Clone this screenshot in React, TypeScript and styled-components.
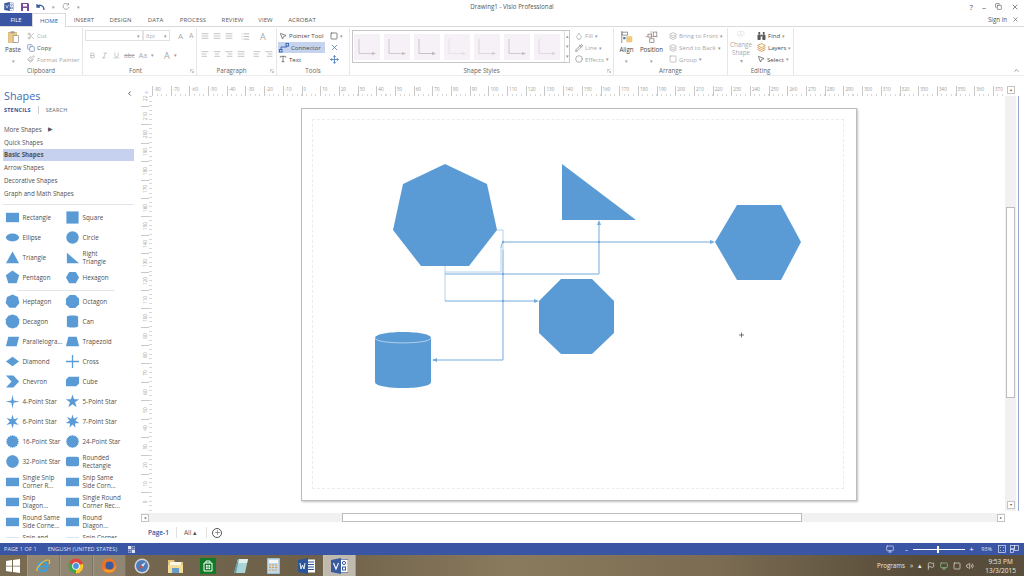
import * as React from 'react';
import styled, { createGlobalStyle } from 'styled-components';
import {
  Scissors, Copy, Paintbrush, MousePointer2, X, ChevronUp, ChevronLeft,
  Bold, Italic, Underline, AlignLeft, AlignCenter, AlignRight, AlignJustify, List,
  Monitor, Volume2, Flag, Plus, Layers, Type, Move, Square, Droplet, Pencil, Circle,
} from 'lucide-react';

const BLUE = '#3a55a4';
const SHAPE = '#5b9bd5';
const LINE = '#74abdd';
const TEXT = '#505050';
const MUTED = '#a9a9a9';

const GlobalStyle = createGlobalStyle`
  html, body { margin: 0; padding: 0; background: #fff; }
  #root { width: 1024px; height: 576px; overflow: hidden; }
  * { box-sizing: border-box; }
`;

const Window = styled.div`
  width: 1024px;
  height: 576px;
  display: flex;
  flex-direction: column;
  font-family: 'Open Sans', 'Noto Sans', sans-serif;
  font-size: 6.5px;
  color: ${TEXT};
  background: #fff;
  overflow: hidden;
`;

/* title bar */
const TitleBar = styled.div`
  height: 13px;
  flex: none;
  display: grid;
  grid-template-columns: 1fr 1fr 1fr;
  align-items: center;
  padding: 0 4px;
`;
const QuickAccess = styled.div`
  display: flex;
  align-items: center;
  gap: 7px;
`;
const Title = styled.div`
  text-align: center;
  font-size: 6.2px;
  white-space: nowrap;
  color: #555;
`;
const WindowControls = styled.div`
  display: flex;
  justify-content: flex-end;
  align-items: center;
  gap: 9px;
  padding-right: 1px;
  font-size: 8px;
`;

/* tabs */
const TabRow = styled.div`
  height: 14px;
  flex: none;
  display: flex;
  align-items: stretch;
  border-bottom: 1px solid #dadada;
`;
const FileTab = styled.div`
  width: 32px;
  background: ${BLUE};
  color: #fff;
  display: flex;
  align-items: center;
  justify-content: center;
  font-size: 6px;
`;
const Tab = styled.div<{ $active?: boolean; $w: number }>`
  width: ${p => p.$w}px;
  display: flex;
  align-items: center;
  justify-content: center;
  font-size: 6px;
  letter-spacing: 0.1px;
  color: ${p => (p.$active ? '#2f56a8' : '#5a5a5a')};
  height: ${p => (p.$active ? '14px' : 'auto')};
  background: #fff;
  border: ${p => (p.$active ? '1px solid #dadada' : 'none')};
  border-bottom: none;
`;
const SignIn = styled.div`
  margin-left: auto;
  display: flex;
  align-items: center;
  gap: 5px;
  padding-right: 5px;
  font-size: 6.2px;
`;

/* ribbon */
const Ribbon = styled.div`
  height: 49px;
  flex: none;
  display: flex;
  position: relative;
  border-bottom: 1px solid #ececec;
`;
const Group = styled.div<{ $w: number }>`
  width: ${p => p.$w}px;
  flex: none;
  display: flex;
  flex-direction: column;
  position: relative;
  margin: 1px 0 0;
  border-right: 1px solid #e6e6e6;
`;
const GroupBody = styled.div<{ $pad?: number }>`
  flex: 1;
  display: flex;
  gap: 4px;
  padding: 2px 2px 0 ${p => p.$pad ?? 4}px;
  min-height: 0;
`;
const GroupLabel = styled.div<{ $shift?: number }>`
  height: 10px;
  flex: none;
  text-align: center;
  font-size: 6.2px;
  line-height: 11px;
  color: #666;
  padding-right: ${p => p.$shift ?? 0}px;
`;
const Launcher = styled.svg`
  position: absolute;
  right: 2px;
  bottom: 2px;
  width: 4px;
  height: 4px;
`;
const BigButton = styled.div<{ $w: number; $muted?: boolean }>`
  width: ${p => p.$w}px;
  flex: none;
  display: flex;
  flex-direction: column;
  align-items: center;
  gap: 3px;
  line-height: 8px;
  text-align: center;
  color: ${p => (p.$muted ? MUTED : '#444')};
  font-size: 6.2px;
  padding-top: 1px;
`;
const Stack = styled.div<{ $w?: number }>`
  display: flex;
  flex-direction: column;
  ${p => (p.$w ? `width: ${p.$w}px; flex: none;` : '')}
`;
const SmallButton = styled.div<{ $muted?: boolean; $active?: boolean }>`
  height: 12px;
  display: flex;
  align-items: center;
  gap: 2px;
  padding: 0 1px;
  white-space: nowrap;
  font-size: 6.1px;
  color: ${p => (p.$muted ? MUTED : '#4a4a4a')};
  background: ${p => (p.$active ? '#c5d3ee' : 'transparent')};
`;
const FontRow = styled.div<{ $indent?: number }>`
  height: 12px;
  display: flex;
  align-items: center;
  gap: 4px;
  margin-bottom: 8px;
  padding-left: ${p => p.$indent ?? 0}px;
  color: ${MUTED};
`;
const Select = styled.div<{ $w: number }>`
  width: ${p => p.$w}px;
  height: 11px;
  border: 1px solid #e2e2e2;
  display: flex;
  align-items: center;
  justify-content: space-between;
  padding: 0 2px;
  margin-right: -4px;
  font-size: 6px;
  color: #b5b5b5;
`;
const Gallery = styled.div`
  width: 218px;
  height: 33px;
  flex: none;
  border: 1px solid #c6c6c6;
  display: flex;
  align-items: center;
  gap: 4px;
  padding: 0 0 0 1px;
`;
const GalleryTile = styled.div`
  width: 26px;
  height: 26px;
  flex: none;
  background: #f6f1f6;
  display: flex;
  align-items: center;
  justify-content: center;
`;
const GalleryArrows = styled.div`
  margin-left: auto;
  align-self: stretch;
  width: 7px;
  display: flex;
  flex-direction: column;
  border-left: 1px solid #e0e0e0;
  color: #999;
  font-size: 5px;
  line-height: 10px;
  text-align: center;
`;
const Caret = styled.span`
  color: #999;
  font-size: 4.5px;
`;
const Collapse = styled.div`
  position: absolute;
  right: 4px;
  bottom: 1px;
  color: #555;
  display: flex;
`;

/* main area */
const Main = styled.div`
  flex: 1;
  min-height: 0;
  display: flex;
`;
const Sidebar = styled.div`
  width: 141px;
  flex: none;
  padding: 13px 0 0 3px;
  margin-bottom: 5px;
  overflow: hidden;
  position: relative;
`;
const PanelTitle = styled.div`
  font-size: 10.8px;
  line-height: 14px;
  color: #3a6cb5;
  padding-left: 1px;
`;
const PanelCaret = styled.div`
  position: absolute;
  top: 14px;
  right: 8px;
  color: #444;
  display: flex;
`;
const PanelTabs = styled.div`
  display: flex;
  gap: 7px;
  align-items: center;
  padding: 1px 0 0 1px;
  font-size: 5.5px;
  height: 12px;
`;
const PanelTab = styled.span<{ $active?: boolean }>`
  font-weight: ${p => (p.$active ? 700 : 400)};
  color: ${p => (p.$active ? '#2f56a0' : '#666')};
  letter-spacing: 0.2px;
`;
const PanelTabDivider = styled.span`
  width: 1px;
  height: 8px;
  background: #ccc;
`;
const Nav = styled.div`
  margin-top: 8px;
  width: 131px;
  padding-bottom: 4px;
  border-bottom: 1px solid #e4e4e4;
`;
const NavItem = styled.div<{ $active?: boolean }>`
  height: 12.8px;
  display: flex;
  align-items: center;
  gap: 6px;
  padding-left: 1px;
  font-size: 6.2px;
  font-weight: ${p => (p.$active ? 700 : 400)};
  background: ${p => (p.$active ? '#c5d1ee' : 'transparent')};
`;
const ShapeGrid = styled.div<{ $top: number }>`
  display: grid;
  grid-template-columns: 60px 62px;
  grid-auto-rows: 20px;
  padding: ${p => p.$top}px 0 0 2px;
`;
const ShapeItem = styled.div`
  display: flex;
  align-items: center;
  gap: 2.5px;
  line-height: 7.8px;
  font-size: 6.3px;
  color: #505050;
`;
const ShapeName = styled.span`
  white-space: pre-line;
`;
const ShapeDivider = styled.div`
  height: 1px;
  width: 97px;
  margin: 2px 0 1px 14px;
  background: #e4e4e4;
`;

/* workspace */
const Workspace = styled.div`
  flex: 1;
  min-width: 0;
  margin-top: 10px;
  display: flex;
  flex-direction: column;
`;
const RulerRow = styled.div`
  height: 10px;
  flex: none;
  display: flex;
`;
const RulerCorner = styled.div`
  width: 11px;
  flex: none;
  display: flex;
  justify-content: center;
  align-items: center;
  color: #b9c8e8;
  font-size: 8px;
`;
const HRuler = styled.div`
  flex: 1;
  display: flex;
  overflow: hidden;
  background: repeating-linear-gradient(90deg, #d8d8d8 0 1px, transparent 1px 4.67px) 0 100% / 100% 2px no-repeat;
`;
const HTick = styled.div`
  width: 18.7px;
  flex: none;
  height: 10px;
  border-left: 1px solid #c8c8c8;
  padding-left: 1px;
  font-size: 4.6px;
  line-height: 7px;
  color: #9a9a9a;
`;
const RulerEnd = styled.div`
  width: 19px;
  flex: none;
  padding-left: 2px;
  display: flex;
  align-items: flex-start;
`;
const ScrollButton = styled.div`
  width: 8px;
  height: 8px;
  border: 1px solid #c4c4c4;
  background: #fff;
  display: flex;
  align-items: center;
  justify-content: center;
  flex: none;
  font-size: 4px;
  line-height: 1;
  color: #555;
`;
const CanvasRow = styled.div`
  flex: 1;
  min-height: 0;
  display: flex;
`;
const VRuler = styled.div`
  width: 11px;
  flex: none;
  display: flex;
  flex-direction: column;
  overflow: hidden;
  background: repeating-linear-gradient(0deg, #d8d8d8 0 1px, transparent 1px 4.6px) 100% 0 / 3px 100% no-repeat;
`;
const VTick = styled.div`
  height: 18.4px;
  flex: none;
  border-bottom: 1px solid #c8c8c8;
  font-size: 4.6px;
  color: #9a9a9a;
  display: flex;
  align-items: center;
  width: 8px;
  &:first-child {
    margin-top: -7.4px;
  }
`;
const VTickLabel = styled.span`
  transform: rotate(-90deg);
  display: block;
  width: 8px;
  text-align: center;
`;
const Canvas = styled.div`
  flex: 1;
  min-width: 0;
  padding: 12px 0 0 149px;
  background: #fff;
  overflow: hidden;
`;
const Page = styled.div`
  width: 556px;
  height: 393px;
  position: relative;
  background: #fff;
  border: 1px solid #bdbdbd;
  box-shadow: 1px 1px 2px rgba(0, 0, 0, 0.25);
`;
const PageMargin = styled.div`
  position: absolute;
  inset: 10px 12px 11px 10px;
  border: 1px dashed #ececec;
`;
const Drawing = styled.svg`
  position: absolute;
  inset: 0;
  width: 100%;
  height: 100%;
  overflow: visible;
`;
const VScroll = styled.div`
  width: 11px;
  flex: none;
  background: #f1f1f1;
  display: flex;
  flex-direction: column;
  align-items: center;
  justify-content: space-between;
  padding: 111px 0 2px;
`;
const VThumb = styled.div`
  width: 9px;
  height: 191px;
  background: #fff;
  border: 1px solid #bdbdbd;
`;
const ScrollGutter = styled.div`
  width: 8px;
  flex: none;
  display: flex;
`;
const BlueEdge = styled.div`
  width: 1px;
  height: 100%;
  margin-left: 2px;
  background: #9aa9d2;
`;
const HScrollRow = styled.div`
  height: 9px;
  flex: none;
  display: flex;
  background: #f1f1f1;
  margin-right: 19px;
  margin-top: 2px;
  align-items: center;
`;
const HThumb = styled.div`
  width: 460px;
  height: 9px;
  margin-left: 193px;
  margin-right: auto;
  background: #fff;
  border: 1px solid #bdbdbd;
`;
const PageTabs = styled.div`
  height: 21px;
  flex: none;
  display: flex;
  align-items: center;
  padding-left: 7px;
  font-size: 6.5px;
  position: relative;
`;
const PageTab = styled.span`
  color: #34559f;
  font-weight: 600;
  width: 28px;
  flex: none;
`;
const AllTab = styled.span`
  width: 31px;
  flex: none;
  border-left: 1px solid #e0e0e0;
  border-right: 1px solid #e0e0e0;
  padding: 1px 0 1px 7px;
  color: #555;
`;
const AddPage = styled.span`
  margin-left: 5px;
  width: 10px;
  height: 10px;
  border-radius: 50%;
  border: 1px solid #555;
  display: flex;
  align-items: center;
  justify-content: center;
  color: #555;
`;

/* status bar */
const StatusBar = styled.div`
  height: 12px;
  flex: none;
  display: flex;
  align-items: center;
  background: ${BLUE};
  color: #dfe5f5;
  font-size: 5.5px;
  padding: 0 5px 0 4px;
`;
const StatusText = styled.span`
  margin-right: 11px;
  letter-spacing: 0.1px;
`;
const StatusRight = styled.div`
  margin-left: auto;
  display: flex;
  align-items: center;
  gap: 4px;
`;
const ZoomSign = styled.span`
  font-size: 8px;
  line-height: 8px;
  width: 5px;
  text-align: center;
  color: #fff;
`;
const ZoomPercent = styled.span`
  margin: 0 2px 0 3px;
`;
const ZoomTrack = styled.div`
  width: 52px;
  height: 1px;
  background: #fff;
  position: relative;
`;
const ZoomThumb = styled.div`
  position: absolute;
  left: 24px;
  top: -3px;
  width: 2px;
  height: 7px;
  background: #fff;
`;

/* task bar */
const Taskbar = styled.div`
  height: 21px;
  flex: none;
  display: flex;
  align-items: center;
  background: linear-gradient(90deg, #7a6c53 0%, #6d6049 30%, #8a7a5d 50%, #7b6c52 70%, #564b39 90%, #5a4f3c 100%);
  color: #ece8df;
  font-size: 6.5px;
`;
const StartButton = styled.div`
  width: 27px;
  flex: none;
  display: flex;
  justify-content: center;
  padding-right: 1px;
`;
const TaskTile = styled.div<{ $level?: number }>`
  width: 32.9px;
  height: 21px;
  flex: none;
  display: flex;
  align-items: center;
  justify-content: center;
  background: rgba(255, 255, 255, ${p => p.$level ?? 0});
  border-left: 1px solid rgba(255, 255, 255, ${p => (p.$level ? 0.15 : 0)});
  border-right: 1px solid rgba(0, 0, 0, ${p => (p.$level ? 0.15 : 0)});
`;
const Tray = styled.div`
  margin-left: auto;
  display: flex;
  align-items: center;
  gap: 5px;
  padding-right: 8px;
`;
const TrayLabel = styled.span`
  font-size: 6.2px;
`;
const Clock = styled.div`
  text-align: center;
  line-height: 9px;
  font-size: 6.5px;
  margin-left: 6px;
`;

const CHEVRON = '▾';

const star = (n: number, inner: number, cx = 8, cy = 8, outer = 7.5) =>
  Array.from({ length: n * 2 }, (_, i) => {
    const r = i % 2 ? inner : outer;
    const a = (Math.PI * i) / n - Math.PI / 2;
    return `${(cx + r * Math.cos(a)).toFixed(2)},${(cy + r * Math.sin(a)).toFixed(2)}`;
  }).join(' ');

const gon = (n: number) => star(n, 6.8).split(' ').filter((_, i) => i % 2 === 0).join(' ');

const ShapeIcon = ({ kind }: { kind: string }) => {
  const shapes: Record<string, React.ReactNode> = {
    rect: <rect x="1" y="3" width="14" height="10" />,
    square: <rect x="1.5" y="1.5" width="13" height="13" />,
    ellipse: <ellipse cx="8" cy="8" rx="7" ry="4.2" />,
    circle: <circle cx="8" cy="8" r="6.6" />,
    triangle: <polygon points="8,1.5 15,14 1,14" />,
    right: <polygon points="2,3 15,14 2,14" />,
    pentagon: <polygon points={gon(5)} />,
    hexagon: <polygon points="1,8 4.5,2 11.5,2 15,8 11.5,14 4.5,14" />,
    heptagon: <polygon points={gon(7)} />,
    octagon: <polygon points="5,1 11,1 15,5 15,11 11,15 5,15 1,11 1,5" />,
    decagon: <polygon points={gon(10)} />,
    can: <path d="M2 3c0-2 12-2 12 0v10c0 2-12 2-12 0z" />,
    para: <polygon points="3.5,3 15,3 12.5,13 1,13" />,
    trapezoid: <polygon points="3.5,3 12.5,3 15,13 1,13" />,
    diamond: <polygon points="8,3 15,8 8,13 1,8" />,
    cross: <polygon points="7.3,1 8.7,1 8.7,7.3 15,7.3 15,8.7 8.7,8.7 8.7,15 7.3,15 7.3,8.7 1,8.7 1,7.3 7.3,7.3" />,
    chevron: <polygon points="1,1.5 9,1.5 15,8 9,14.5 1,14.5 7,8" />,
    cube: <path d="M1 6l3-3h11v7l-3 3H1z" />,
    s4: <polygon points={star(4, 1.7)} />,
    s5: <polygon points={star(5, 2.9)} />,
    s6: <polygon points={star(6, 2.8)} />,
    s7: <polygon points={star(7, 3.2)} />,
    s16: <polygon points={star(16, 5.9, 8, 8, 7)} />,
    s24: <polygon points={star(24, 6.2, 8, 8, 7)} />,
    s32: <polygon points={star(32, 6.3, 8, 8, 7)} />,
    round: <rect x="1" y="3" width="14" height="10" rx="2" />,
    plain: <rect x="1" y="4" width="14" height="9" />,
  };
  return (
    <svg width="15" height="15" viewBox="0 0 16 16" fill={SHAPE} style={{ flex: 'none' }}>
      {shapes[kind]}
    </svg>
  );
};

const ElbowArrow = ({ color }: { color: string }) => (
  <svg width="26" height="26" viewBox="0 0 26 26" fill="none" stroke={color} strokeWidth="0.8">
    <path d="M5 5v14.500h14" />
    <polygon points="22,19.500 18,17.800 18,21.200" fill={color} stroke="none" />
  </svg>
);

const DialogLauncher = () => (
  <Launcher viewBox="0 0 4 4" fill="none" stroke="#aaa" strokeWidth="0.6">
    <path d="M0.3 3.700V0.300h3.400M1 1l2.500 2.500M3.500 2v1.500H2" />
  </Launcher>
);

const PasteIcon = () => (
  <svg width="17" height="18" viewBox="0 0 17 18">
    <rect x="1" y="2" width="12" height="15" fill="#edc987" stroke="#d3ae6c" />
    <rect x="4" y="0.5" width="6" height="3" fill="#9a9a9a" />
    <rect x="8" y="7" width="8" height="10" fill="#fff" stroke="#888" />
  </svg>
);

const AlignIcon = () => (
  <svg width="16" height="16" viewBox="0 0 16 16">
    <path d="M1 0v16" stroke="#777" />
    <rect x="1.5" y="1.5" width="7" height="4" fill="#fff" stroke="#777" />
    <rect x="3" y="8" width="3" height="3" fill="#3b78b8" />
    <rect x="7" y="7" width="8" height="8" fill="#efc77f" />
  </svg>
);

const PositionIcon = () => (
  <svg width="17" height="17" viewBox="0 0 17 17" fill="none" stroke="#777">
    <path d="M0 8h17M8 0v17" stroke="#d98a75" />
    <rect x="3.5" y="4.5" width="5" height="4" fill="#fff" />
    <rect x="11" y="1.5" width="5" height="6" fill="#fff" />
    <rect x="6" y="11" width="6" height="5" fill="#fff" />
  </svg>
);

const ChangeShapeIcon = () => (
  <svg width="18" height="17" viewBox="0 0 19 18" fill="#fff" stroke="#cfcfcf">
    <path d="M1 1h10v10H1z" />
    <circle cx="13" cy="6" r="5" />
    <path d="M8 9l5 4-5 4-5-4z" />
  </svg>
);

const ConnectorIcon = () => (
  <svg width="10" height="10" viewBox="0 0 10 10" fill="none" stroke="#3f6db5">
    <rect x="0.5" y="6.5" width="2.5" height="2.5" />
    <rect x="7" y="0.5" width="2.5" height="2.5" />
    <path d="M2 6.5V4h6V3" />
  </svg>
);

const Binoculars = () => (
  <svg width="9" height="8" viewBox="0 0 10 9" fill="#5a5a5a">
    <rect x="0.5" y="3" width="3.6" height="6" rx="1" />
    <rect x="5.9" y="3" width="3.6" height="6" rx="1" />
    <rect x="1.5" y="0" width="2" height="3" />
    <rect x="6.5" y="0" width="2" height="3" />
    <rect x="4" y="3" width="2" height="2" />
  </svg>
);

const MacroIcon = () => (
  <svg width="7" height="7" viewBox="0 0 7 7" fill="#dfe5f5">
    <rect x="0" y="0" width="3" height="3" />
    <rect x="4" y="0" width="3" height="3" fill="none" stroke="#dfe5f5" strokeWidth="0.7" />
    <rect x="0" y="4" width="3" height="3" fill="none" stroke="#dfe5f5" strokeWidth="0.7" />
    <rect x="4" y="4" width="3" height="3" />
  </svg>
);

const FitIcon = () => (
  <svg width="8" height="8" viewBox="0 0 8 8" fill="none" stroke="#dfe5f5" strokeWidth="0.7">
    <rect x="0.4" y="0.4" width="7.200" height="7.200" />
    <path d="M2 2l1 1M6 2L5 3M2 6l1-1M6 6L5 5" />
  </svg>
);

const PanIcon = () => (
  <svg width="9" height="8" viewBox="0 0 9 8" fill="none" stroke="#dfe5f5" strokeWidth="0.7">
    <rect x="0.4" y="0.4" width="4" height="3" />
    <rect x="4.600" y="0.4" width="4" height="5" />
    <rect x="0.4" y="4.400" width="3" height="3.200" />
  </svg>
);

const WinLogo = () => (
  <svg width="14" height="14" viewBox="0 0 14 14" fill="#fff">
    <polygon points="0,2 6,1.1 6,6.7 0,6.7" />
    <polygon points="7,1 14,0 14,6.7 7,6.7" />
    <polygon points="0,7.4 6,7.4 6,12.9 0,12" />
    <polygon points="7,7.4 14,7.4 14,14 7,13" />
  </svg>
);

const IeIcon = () => (
  <svg width="16" height="16" viewBox="0 0 16 16" fill="none">
    <circle cx="8" cy="8.5" r="4.6" stroke="#2fa4e7" strokeWidth="2" />
    <path d="M3 8.5h10" stroke="#2fa4e7" strokeWidth="1.6" />
    <path d="M2 13C1 10 8 2 13 2c2 0 2 2 1 4" stroke="#f3c230" strokeWidth="1.2" />
  </svg>
);

const ChromeIcon = () => (
  <svg width="16" height="16" viewBox="0 0 16 16">
    <circle cx="8" cy="8" r="7.5" fill="#e0463a" />
    <path d="M8 8L1.2 4.8A7.5 7.5 0 0 0 8 15.5L11 9z" fill="#3ca650" />
    <path d="M8 8l7-2.2A7.5 7.5 0 0 1 8 15.5z" fill="#f5c92f" />
    <circle cx="8" cy="8" r="3.8" fill="#fff" />
    <circle cx="8" cy="8" r="2.9" fill="#4a8fe0" />
  </svg>
);

const FirefoxIcon = () => (
  <svg width="16" height="16" viewBox="0 0 16 16">
    <circle cx="8" cy="8" r="7.5" fill="#e8742a" />
    <circle cx="8.5" cy="7.5" r="4" fill="#3a5aa0" />
    <path d="M2 11C3 14 8 15 11 14c3-1 4-4 4-7-1 3-3 5-6 5s-5-1-7-1z" fill="#f2a02c" />
  </svg>
);

const SafariIcon = () => (
  <svg width="16" height="16" viewBox="0 0 16 16">
    <circle cx="8" cy="8" r="7.5" fill="#cfd3d8" />
    <circle cx="8" cy="8" r="6" fill="#4c7cbc" />
    <polygon points="12,4 9,9 7,7" fill="#e0e4ea" />
    <polygon points="4,12 9,9 7,7" fill="#d64a3a" />
  </svg>
);

const FolderIcon = () => (
  <svg width="17" height="16" viewBox="0 0 17 16">
    <path d="M1 2h6l1 2h8v11H1z" fill="#e8c678" />
    <rect x="3" y="4" width="11" height="4" fill="#fbf6e6" />
    <path d="M1 7h15v8H1z" fill="#f4dc9b" />
    <rect x="5" y="10" width="7" height="5" fill="#6a9cc8" />
  </svg>
);

const StoreIcon = () => (
  <svg width="16" height="16" viewBox="0 0 16 16">
    <rect width="16" height="16" fill="#0f7b24" />
    <path d="M4 5h8v8H4z" fill="none" stroke="#fff" />
    <path d="M6 5V3h4v2" fill="none" stroke="#fff" />
    <rect x="6" y="7" width="1.7" height="1.7" fill="#fff" />
    <rect x="8.4" y="7" width="1.7" height="1.7" fill="#fff" />
    <rect x="6" y="9.4" width="1.7" height="1.7" fill="#fff" />
    <rect x="8.4" y="9.4" width="1.7" height="1.7" fill="#fff" />
  </svg>
);

const NotesIcon = () => (
  <svg width="16" height="16" viewBox="0 0 16 16">
    <polygon points="5,1 15,1 12,15 1,15" fill="#a9d3d6" />
    <polygon points="5,1 15,1 14,5 4,5" fill="#dff0ee" />
    <polygon points="1,15 5,1 6,1 3,15" fill="#5f9ea6" />
  </svg>
);

const CalcIcon = () => (
  <svg width="13" height="16" viewBox="0 0 13 16">
    <rect width="13" height="16" fill="#c2d9ea" stroke="#7ba2c2" />
    <rect x="2" y="2" width="9" height="3" fill="#f4f8fb" />
    <path d="M2 7h9M2 9.5h9M2 12h9" stroke="#e29a43" strokeDasharray="2 1" />
  </svg>
);

const WordIcon = () => (
  <svg width="17" height="16" viewBox="0 0 17 16">
    <rect x="8" y="1.5" width="9" height="13" fill="#fff" />
    <path d="M10 4h6M10 6.5h6M10 9h6M10 11.5h6" stroke="#2a5699" />
    <polygon points="0,2 10,0 10,16 0,14" fill="#2a5699" />
    <path d="M2 5l1 6 1.5-4L6 11l1-6" stroke="#fff" fill="none" strokeWidth="0.9" />
  </svg>
);

const VisioIcon = ({ size = 16 }: { size?: number }) => (
  <svg width={size + 1} height={size} viewBox="0 0 17 16">
    <rect x="8" y="1.5" width="9" height="13" fill="#fff" stroke="#3a5aa0" strokeWidth="0.6" />
    <circle cx="13" cy="5" r="1.6" fill="none" stroke="#3a5aa0" />
    <rect x="11.5" y="9" width="3" height="3" fill="none" stroke="#3a5aa0" />
    <polygon points="0,2 10,0 10,16 0,14" fill="#3a5aa0" />
    <path d="M2.5 5L5 11l2.5-6" stroke="#fff" fill="none" strokeWidth="1.1" />
  </svg>
);

type ShapeDef = [string, string];
const TOP_SHAPES: ShapeDef[] = [
  ['rect', 'Rectangle'], ['square', 'Square'],
  ['ellipse', 'Ellipse'], ['circle', 'Circle'],
  ['triangle', 'Triangle'], ['right', 'Right\nTriangle'],
  ['pentagon', 'Pentagon'], ['hexagon', 'Hexagon'],
];
const MORE_SHAPES: ShapeDef[] = [
  ['heptagon', 'Heptagon'], ['octagon', 'Octagon'],
  ['decagon', 'Decagon'], ['can', 'Can'],
  ['para', 'Parallelogra...'], ['trapezoid', 'Trapezoid'],
  ['diamond', 'Diamond'], ['cross', 'Cross'],
  ['chevron', 'Chevron'], ['cube', 'Cube'],
  ['s4', '4-Point Star'], ['s5', '5-Point Star'],
  ['s6', '6-Point Star'], ['s7', '7-Point Star'],
  ['s16', '16-Point Star'], ['s24', '24-Point Star'],
  ['s32', '32-Point Star'], ['round', 'Rounded\nRectangle'],
  ['plain', 'Single Snip\nCorner R...'], ['plain', 'Snip Same\nSide Corn...'],
  ['plain', 'Snip\nDiagon...'], ['plain', 'Single Round\nCorner Rec...'],
  ['plain', 'Round Same\nSide Corne...'], ['plain', 'Round\nDiagon...'],
  ['plain', 'Snip and\nRound...'], ['plain', 'Snip Corner\nRectangle'],
];
const NAV = ['Quick Shapes', 'Basic Shapes', 'Arrow Shapes', 'Decorative Shapes', 'Graph and Math Shapes'];
const TABS: [string, number][] = [
  ['INSERT', 36], ['DESIGN', 37], ['DATA', 33], ['PROCESS', 42], ['REVIEW', 37], ['VIEW', 29], ['ACROBAT', 44],
];
const TILE_COLORS = ['#c4bfc4', '#c4bfc4', '#bdb8bd', '#e2dee2', '#d4d0d4', '#c4bfc4', '#dad6da'];

const hLabels = Array.from({ length: 46 }, (_, i) => -80 + i * 10);
const vLabels = Array.from({ length: 23 }, (_, i) => 220 - i * 10);

const Connectors = () => (
  <Drawing viewBox="302 109 554 391">
    <polygon fill={SHAPE} points="445,164 487,184 497,230 469,266 421,266 393,230 403,184" />
    <polygon fill={SHAPE} points="562,164 636,220 562,220" />
    <polygon fill={SHAPE} points="561,279 592,279 614,301 614,333 592,354 561,354 539,333 539,301" />
    <polygon fill={SHAPE} points="715,242 737,205 781,205 801,242 781,280 737,280" />
    <path fill={SHAPE} d="M375 338c0-8 56-8 56 0v44c0 8-56 8-56 0z" />
    <path fill="none" stroke="#c4dcf0" strokeWidth="0.8" d="M375 338c0 6.500 56 6.500 56 0" />

    <g fill="none" stroke="#b5d2ec" strokeWidth="1">
      <path d="M497 230h6v20" />
      <path d="M445 266v35" />
      <path d="M445 272h56v-24" />
    </g>
    <g fill="none" stroke={LINE} strokeWidth="1">
      <path d="M503 250v110H433" />
      <path d="M445 274h154V224" />
      <path d="M445 301h90" />
      <path d="M501 248q0-6 4-6h208" />
    </g>
    <g fill={LINE}>
      <polygon points="432,360 437,358 437,362" />
      <polygon points="539,301 534,299 534,303" />
      <polygon points="599,220 597,225 601,225" />
      <polygon points="715,242 710,240 710,244" />
      <circle cx="503" cy="274" r="1.200" />
      <circle cx="503" cy="301" r="1.200" />
      <circle cx="503" cy="242" r="1.200" />
      <circle cx="599" cy="242" r="1.200" />
    </g>
    <path d="M739 335h5M741.500 332.500v5" stroke="#555" strokeWidth="0.8" />
  </Drawing>
);

const App = () => (
  <Window>
    <GlobalStyle />
    <TitleBar>
      <QuickAccess>
        <VisioIcon size={9} />
        <svg width="8" height="8" viewBox="0 0 8 8" fill="#7a4a9a">
          <path d="M0 0h7l1 1v7H0zM2 1v2.500h4V1zM2 5v3h4V5z" fillRule="evenodd" />
        </svg>
        <svg width="9" height="8" viewBox="0 0 9 8" fill="none" stroke="#3a5aa0" strokeWidth="1.300">
          <path d="M1 1v3h3M1 4c2-3 7-2 7 3" />
        </svg>
        <Caret>{CHEVRON}</Caret>
        <svg width="8" height="8" viewBox="0 0 8 8" fill="none" stroke="#aaa">
          <path d="M6.500 1.500A3 3 0 1 0 7 4M6.500 0v2h-2" />
        </svg>
        <Caret>{CHEVRON}</Caret>
      </QuickAccess>
      <Title>Drawing1 - Visio Professional</Title>
      <WindowControls>
        <span>?</span>
        <span>–</span>
        <Copy size={7} />
        <X size={8} />
      </WindowControls>
    </TitleBar>

    <TabRow>
      <FileTab>FILE</FileTab>
      <Tab $active $w={34}>HOME</Tab>
      {TABS.map(([t, w]) => (
        <Tab key={t} $w={w}>{t}</Tab>
      ))}
      <SignIn>
        Sign in <X size={7} />
      </SignIn>
    </TabRow>

    <Ribbon>
      <Group $w={83}>
        <GroupBody>
          <BigButton $w={18}>
            <PasteIcon />
            Paste
            <Caret>{CHEVRON}</Caret>
          </BigButton>
          <Stack>
            <SmallButton $muted><Scissors size={8} /> Cut</SmallButton>
            <SmallButton><Copy size={8} color="#5c7fae" /> Copy</SmallButton>
            <SmallButton $muted><Paintbrush size={8} /> Format Painter</SmallButton>
          </Stack>
        </GroupBody>
        <GroupLabel>Clipboard</GroupLabel>
      </Group>

      <Group $w={114}>
        <GroupBody $pad={2}>
          <Stack>
            <FontRow>
              <Select $w={58}><span /><Caret>{CHEVRON}</Caret></Select>
              <Select $w={27}>8pt<Caret>{CHEVRON}</Caret></Select>
              <span style={{ marginLeft: 8, fontSize: 8 }}>A</span>
              <span style={{ marginLeft: 2, fontSize: 7 }}>A</span>
            </FontRow>
            <FontRow $indent={4}>
              <Bold size={7} />
              <Italic size={7} style={{ marginLeft: 1 }} />
              <Underline size={7} style={{ marginLeft: 1 }} />
              <span style={{ textDecoration: 'line-through' }}>abc</span>
              <span style={{ fontSize: 7 }}>Aa</span>
              <Caret>{CHEVRON}</Caret>
              <span style={{ marginLeft: 6, fontSize: 9 }}>A</span>
              <Caret>{CHEVRON}</Caret>
            </FontRow>
          </Stack>
        </GroupBody>
        <GroupLabel $shift={8}>Font</GroupLabel>
        <DialogLauncher />
      </Group>

      <Group $w={80}>
        <GroupBody $pad={4}>
          <Stack>
            <FontRow>
              <AlignJustify size={8} />
              <AlignJustify size={8} />
              <AlignJustify size={8} />
              <List size={9} style={{ marginLeft: 4 }} />
              <span style={{ marginLeft: 6, fontSize: 9 }}>A</span>
            </FontRow>
            <FontRow>
              <AlignLeft size={8} />
              <AlignCenter size={8} />
              <AlignRight size={8} />
              <AlignJustify size={8} />
              <AlignLeft size={8} style={{ marginLeft: 4 }} />
              <AlignRight size={8} />
            </FontRow>
          </Stack>
        </GroupBody>
        <GroupLabel $shift={10}>Paragraph</GroupLabel>
        <DialogLauncher />
      </Group>

      <Group $w={73}>
        <GroupBody $pad={1}>
          <Stack $w={47}>
            <SmallButton><MousePointer2 size={8} /> Pointer Tool</SmallButton>
            <SmallButton $active><ConnectorIcon /> Connector</SmallButton>
            <SmallButton><Type size={8} /> Text</SmallButton>
          </Stack>
          <Stack>
            <SmallButton><Square size={8} /><Caret>{CHEVRON}</Caret></SmallButton>
            <SmallButton><X size={9} color="#3f6db5" /></SmallButton>
            <SmallButton><Move size={9} color="#3f6db5" /></SmallButton>
          </Stack>
        </GroupBody>
        <GroupLabel>Tools</GroupLabel>
      </Group>

      <Group $w={264}>
        <GroupBody $pad={2}>
          <Gallery>
            {TILE_COLORS.map((c, i) => (
              <GalleryTile key={i}><ElbowArrow color={c} /></GalleryTile>
            ))}
            <GalleryArrows>
              <span>▴</span>
              <span>▾</span>
              <span>▾</span>
            </GalleryArrows>
          </Gallery>
          <Stack>
            <SmallButton $muted><Droplet size={8} /> Fill <Caret>{CHEVRON}</Caret></SmallButton>
            <SmallButton $muted><Pencil size={8} color="#666" /> Line <Caret>{CHEVRON}</Caret></SmallButton>
            <SmallButton $muted><Circle size={8} color="#888" /> Effects <Caret>{CHEVRON}</Caret></SmallButton>
          </Stack>
        </GroupBody>
        <GroupLabel>Shape Styles</GroupLabel>
        <DialogLauncher />
      </Group>

      <Group $w={114}>
        <GroupBody $pad={4}>
          <BigButton $w={17}>
            <AlignIcon />
            Align
            <Caret>{CHEVRON}</Caret>
          </BigButton>
          <BigButton $w={25}>
            <PositionIcon />
            Position
            <Caret>{CHEVRON}</Caret>
          </BigButton>
          <Stack>
            <SmallButton $muted><Layers size={8} /> Bring to Front <Caret>{CHEVRON}</Caret></SmallButton>
            <SmallButton $muted><Layers size={8} /> Send to Back <Caret>{CHEVRON}</Caret></SmallButton>
            <SmallButton $muted><Square size={8} /> Group <Caret>{CHEVRON}</Caret></SmallButton>
          </Stack>
        </GroupBody>
        <GroupLabel>Arrange</GroupLabel>
      </Group>

      <Group $w={66}>
        <GroupBody $pad={2}>
          <BigButton $w={22} $muted>
            <ChangeShapeIcon />
            Change Shape ▾
          </BigButton>
          <Stack>
            <SmallButton><Binoculars /> Find <Caret>{CHEVRON}</Caret></SmallButton>
            <SmallButton><Layers size={9} color="#c8862e" /> Layers <Caret>{CHEVRON}</Caret></SmallButton>
            <SmallButton><MousePointer2 size={8} /> Select <Caret>{CHEVRON}</Caret></SmallButton>
          </Stack>
        </GroupBody>
        <GroupLabel>Editing</GroupLabel>
      </Group>

      <Collapse><ChevronUp size={7} /></Collapse>
    </Ribbon>

    <Main>
      <Sidebar>
        <PanelTitle>Shapes</PanelTitle>
        <PanelCaret><ChevronLeft size={7} strokeWidth={3} /></PanelCaret>
        <PanelTabs>
          <PanelTab $active>STENCILS</PanelTab>
          <PanelTabDivider />
          <PanelTab>SEARCH</PanelTab>
        </PanelTabs>
        <Nav>
          <NavItem>More Shapes <Caret style={{ color: '#555', fontSize: 6 }}>▶</Caret></NavItem>
          {NAV.map(n => (
            <NavItem key={n} $active={n === 'Basic Shapes'}>{n}</NavItem>
          ))}
        </Nav>
        <ShapeGrid $top={3}>
          {TOP_SHAPES.map(([k, n]) => (
            <ShapeItem key={n}><ShapeIcon kind={k} /><ShapeName>{n}</ShapeName></ShapeItem>
          ))}
        </ShapeGrid>
        <ShapeDivider />
        <ShapeGrid $top={0}>
          {MORE_SHAPES.map(([k, n]) => (
            <ShapeItem key={n}><ShapeIcon kind={k} /><ShapeName>{n}</ShapeName></ShapeItem>
          ))}
        </ShapeGrid>
      </Sidebar>

      <Workspace>
        <RulerRow>
          <RulerCorner>+</RulerCorner>
          <HRuler>
            {hLabels.map(n => <HTick key={n}>{n}</HTick>)}
          </HRuler>
          <RulerEnd>
            <ScrollButton>▴</ScrollButton>
          </RulerEnd>
        </RulerRow>
        <CanvasRow>
          <VRuler>
            {vLabels.map(n => (
              <VTick key={n}><VTickLabel>{n}</VTickLabel></VTick>
            ))}
          </VRuler>
          <Canvas>
            <Page>
              <PageMargin />
              <Connectors />
            </Page>
          </Canvas>
          <VScroll>
            <VThumb />
            <ScrollButton>▾</ScrollButton>
          </VScroll>
          <ScrollGutter>
            <BlueEdge />
          </ScrollGutter>
        </CanvasRow>
        <HScrollRow>
          <ScrollButton>◂</ScrollButton>
          <HThumb />
          <ScrollButton>▸</ScrollButton>
        </HScrollRow>
        <PageTabs>
          <PageTab>Page-1</PageTab>
          <AllTab>All ▴</AllTab>
          <AddPage><Plus size={7} /></AddPage>
        </PageTabs>
      </Workspace>
    </Main>

    <StatusBar>
      <StatusText>PAGE 1 OF 1</StatusText>
      <StatusText>ENGLISH (UNITED STATES)</StatusText>
      <MacroIcon />
      <StatusRight>
        <Monitor size={8} style={{ marginRight: 6 }} />
        <ZoomSign>-</ZoomSign>
        <ZoomTrack><ZoomThumb /></ZoomTrack>
        <ZoomSign>+</ZoomSign>
        <ZoomPercent>93%</ZoomPercent>
        <FitIcon />
        <PanIcon />
      </StatusRight>
    </StatusBar>

    <Taskbar>
      <StartButton><WinLogo /></StartButton>
      <TaskTile $level={0.2}><IeIcon /></TaskTile>
      <TaskTile $level={0.2}><ChromeIcon /></TaskTile>
      <TaskTile $level={0.2}><FirefoxIcon /></TaskTile>
      <TaskTile><SafariIcon /></TaskTile>
      <TaskTile><FolderIcon /></TaskTile>
      <TaskTile><StoreIcon /></TaskTile>
      <TaskTile><NotesIcon /></TaskTile>
      <TaskTile><CalcIcon /></TaskTile>
      <TaskTile><WordIcon /></TaskTile>
      <TaskTile $level={0.55}><VisioIcon /></TaskTile>
      <Tray>
        <TrayLabel>Programs</TrayLabel>
        <span>»</span>
        <span>▴</span>
        <Flag size={8} />
        <Monitor size={8} color="#8fd08f" />
        <Square size={8} />
        <Volume2 size={8} />
        <Clock>9:53 PM<br />13/3/2015</Clock>
      </Tray>
    </Taskbar>
  </Window>
);

export default App;
